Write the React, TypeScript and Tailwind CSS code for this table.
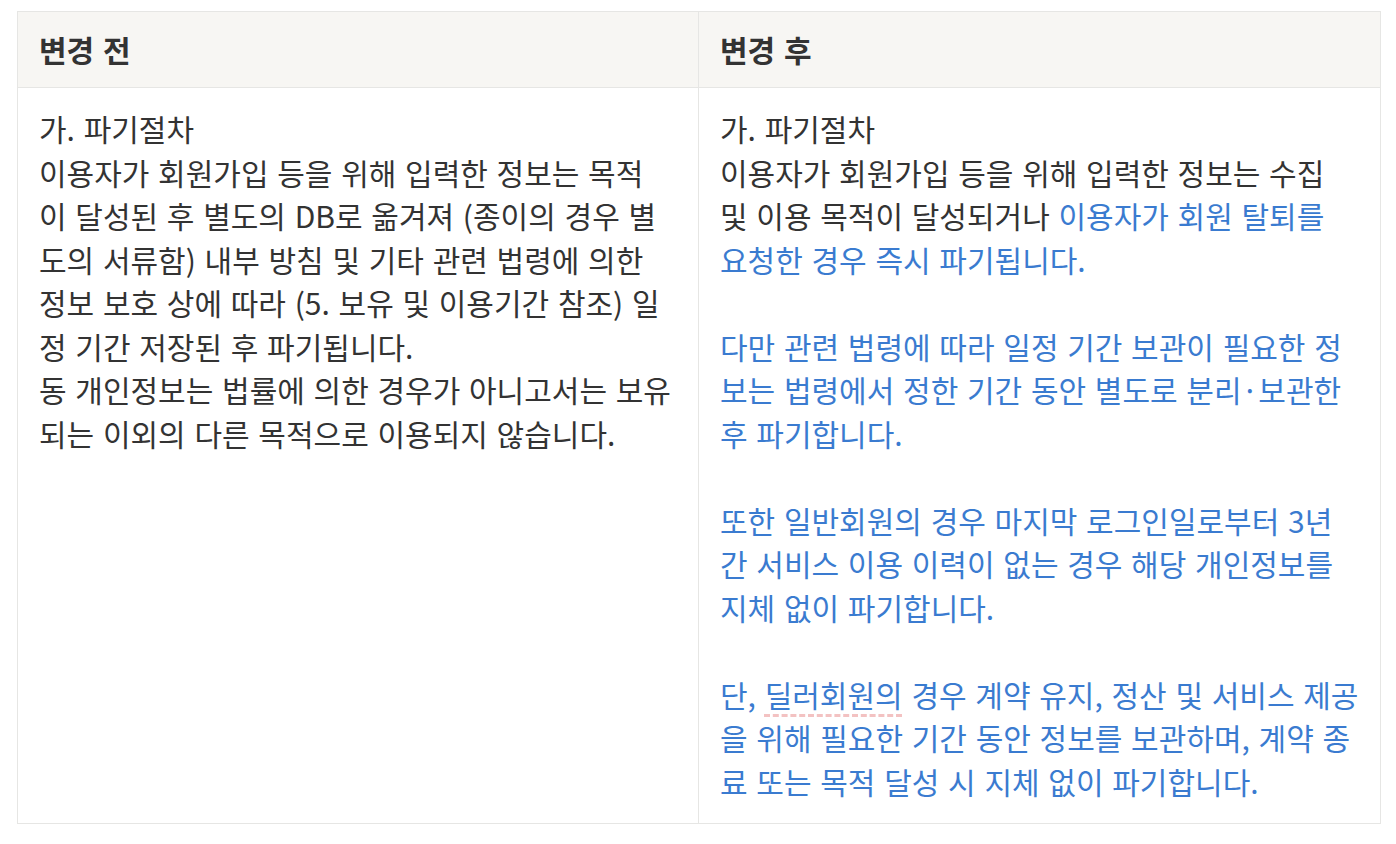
import React from 'react';

const before = [
    '가. 파기절차',
    '이용자가 회원가입 등을 위해 입력한 정보는 목적',
    '이 달성된 후 별도의 DB로 옮겨져 (종이의 경우 별',
    '도의 서류함) 내부 방침 및 기타 관련 법령에 의한',
    '정보 보호 상에 따라 (5. 보유 및 이용기간 참조) 일',
    '정 기간 저장된 후 파기됩니다.',
    '동 개인정보는 법률에 의한 경우가 아니고서는 보유',
    '되는 이외의 다른 목적으로 이용되지 않습니다.',
];

function Line({ children }: { children?: React.ReactNode }) {
    return <div className="whitespace-nowrap h-[43.5px]">{children}</div>;
}

export default function App() {
    return (
        <div className="bg-white w-[1396px] h-[844px] pt-[11px] px-[17px]" style={{ fontFamily: '"Noto Sans CJK KR", "Noto Sans", sans-serif' }}>
            <table className="w-[1364px] border-collapse border border-[#e6e6e4] text-[30px] leading-[43.5px] text-[#333333] [word-spacing:2px] table-fixed">
                <thead>
                    <tr className="bg-[#f7f6f3]">
                        <th className="w-[681px] h-[76px] border border-[#e6e6e4] px-[21px] text-left font-bold">변경 전</th>
                        <th className="h-[76px] border border-[#e6e6e4] px-[21px] text-left font-bold">변경 후</th>
                    </tr>
                </thead>
                <tbody>
                    <tr>
                        <td className="align-top border border-[#e6e6e4] px-[21px] pt-[19px] pb-[20px]">
                            {before.map((t) => (
                                <Line key={t}>{t}</Line>
                            ))}
                        </td>
                        <td className="align-top border border-[#e6e6e4] px-[21px] pt-[19px] pb-[20px]">
                            <Line>가. 파기절차</Line>
                            <Line>이용자가 회원가입 등을 위해 입력한 정보는 수집</Line>
                            <Line>
                                및 이용 목적이 달성되거나 <span className="text-[#3a7bd0]">이용자가 회원 탈퇴를</span>
                            </Line>
                            <div className="text-[#3a7bd0]">
                                <Line>요청한 경우 즉시 파기됩니다.</Line>
                                <Line />
                                <Line>다만 관련 법령에 따라 일정 기간 보관이 필요한 정</Line>
                                <Line>보는 법령에서 정한 기간 동안 별도로 분리·보관한</Line>
                                <Line>후 파기합니다.</Line>
                                <Line />
                                <Line>또한 일반회원의 경우 마지막 로그인일로부터 3년</Line>
                                <Line>간 서비스 이용 이력이 없는 경우 해당 개인정보를</Line>
                                <Line>지체 없이 파기합니다.</Line>
                                <Line />
                                <Line>
                                    단, <span className="underline decoration-dashed decoration-[#f3c2c2] underline-offset-[7px]">딜러회원의</span> 경우 계약 유지, 정산 및 서비스 제공
                                </Line>
                                <Line>을 위해 필요한 기간 동안 정보를 보관하며, 계약 종</Line>
                                <Line>료 또는 목적 달성 시 지체 없이 파기합니다.</Line>
                            </div>
                        </td>
                    </tr>
                </tbody>
            </table>
        </div>
    );
}
